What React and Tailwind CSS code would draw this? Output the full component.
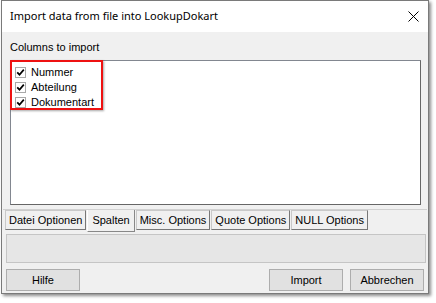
import React from "react";

function Check() {
  return (
    <span className="w-[11px] h-[11px] border border-[#a9a9a9] bg-white flex items-center justify-center">
      <svg width="9" height="9" viewBox="0 0 9 9">
        <path d="M1.2 4.3 L3.5 6.7 L7.8 1.6" fill="none" stroke="#000" strokeWidth="1.7" />
      </svg>
    </span>
  );
}

const tabs = ["Datei Optionen", "Spalten", "Misc. Options", "Quote Options", "NULL Options"];

export default function App() {
  return (
    <div className="w-[436px] h-[303px] bg-white overflow-hidden relative font-['Liberation_Sans',Arial,sans-serif] text-[11px] text-black">
      {/* window */}
      <div className="ml-[1px] w-[428px] h-[294px] border border-[#7a7a7a] bg-[#f0f0f0] shadow-[2px_2px_3px_rgba(0,0,0,0.45)] flex flex-col">
        {/* title bar */}
        <div className="h-[31px] bg-white flex items-center justify-between pl-[8px] pr-[9px]">
          <span className="text-[11px] font-['Noto_Sans',sans-serif] text-black">Import data from file into LookupDokart</span>
          <svg width="11" height="11" viewBox="0 0 11 11">
            <path d="M0.5 0.5 L10.5 10.5 M10.5 0.5 L0.5 10.5" stroke="#000" strokeWidth="1" />
          </svg>
        </div>

        {/* body */}
        <div className="flex-1 flex flex-col">
          <div className="pl-[8px] pt-[7px] h-[28px]">Columns to import</div>

          {/* list */}
          <div className="relative ml-[8px] w-[411px] h-[145px] bg-white border border-[#828790] border-r-[#666] border-b-[#666] pt-[4px] pl-[4px]">
            {["Nummer", "Abteilung", "Dokumentart"].map((c) => (
              <div key={c} className="h-[15px] flex items-center gap-[5px]">
                <Check />
                <span>{c}</span>
              </div>
            ))}
            <div className="absolute left-[-1px] top-[-1px] w-[93px] h-[50px] border-2 border-[#ee1111] shadow-[1px_1px_2px_rgba(0,0,0,0.35)]" />
          </div>

          {/* tabs */}
          <div className="mt-[4px] h-[1px] bg-[#d0d0d0] mx-[1px]" />
          <div className="flex items-start pl-[2px] h-[24px]">
            {tabs.map((t) => {
              const sel = t === "Spalten";
              return sel ? (
                <div key={t} className="ml-[1px] h-[22px] px-[4px] flex items-end pb-[3px] border-l border-white border-r border-r-[#888] border-b border-b-[#888] bg-[#f0f0f0]">
                  {t}
                </div>
              ) : (
                <div key={t} className="ml-[1px] h-[20px] px-[3px] flex items-center border border-[#c9c9c9] border-r-[#777] border-b-[#777] bg-[#f0f0f0]">
                  {t}
                </div>
              );
            })}
          </div>

          {/* panel */}
          <div className="ml-[4px] w-[420px] h-[29px] bg-[#e6e6e6] border border-[#c5c5c5]" />

          {/* buttons */}
          <div className="flex items-center justify-between px-[4px] mt-[6px]">
            <button className="w-[74px] h-[22px] bg-[#e1e1e1] border border-[#adadad]">Hilfe</button>
            <div className="flex gap-[7px]">
              <button className="w-[74px] h-[22px] bg-[#e1e1e1] border border-[#adadad]">Import</button>
              <button className="w-[74px] h-[22px] bg-[#e1e1e1] border border-[#adadad]">Abbrechen</button>
            </div>
          </div>
        </div>
      </div>
    </div>
  );
}
